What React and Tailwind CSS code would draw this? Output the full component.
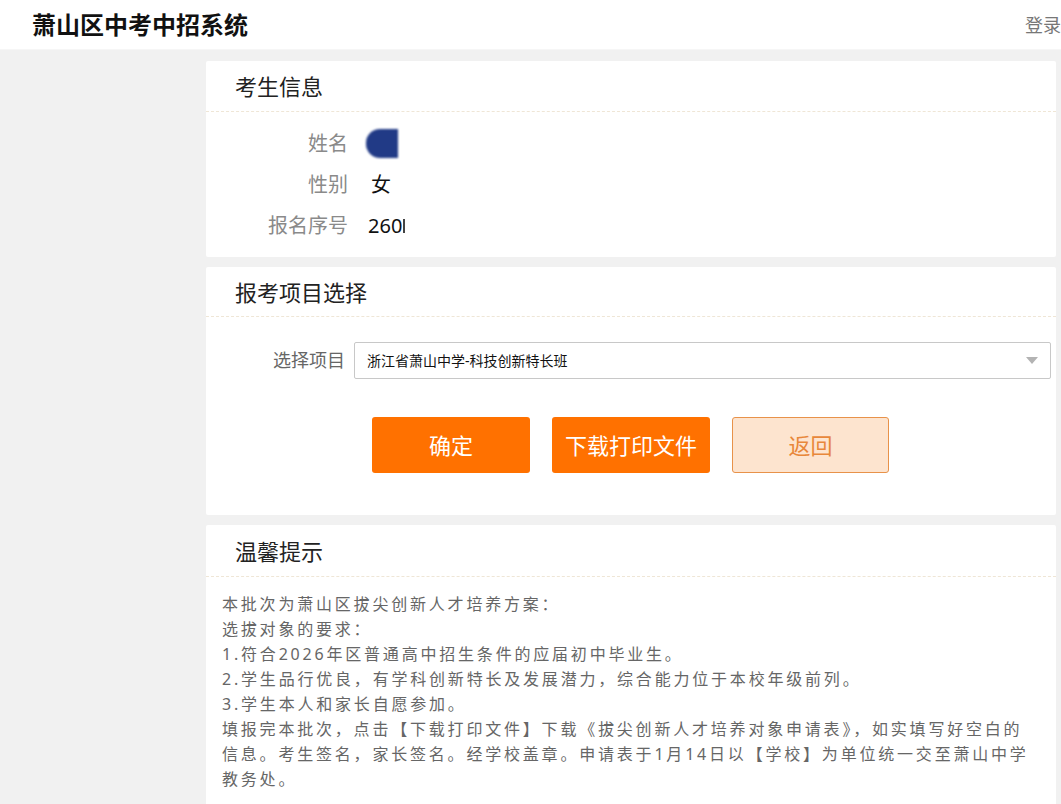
import React from 'react'

const sans = { fontFamily: '"Noto Sans", "Noto Sans CJK SC", sans-serif' }

function Card({ title, headerH, children }) {
  return (
    <div className="bg-white rounded-[2px]">
      <div className={`${headerH} flex items-center pl-[29px] border-b border-dashed border-[#efe6d6]`}>
        <h2 className="text-[22px] text-[#222] leading-none">{title}</h2>
      </div>
      {children}
    </div>
  )
}

function InfoRow({ label, children }) {
  return (
    <div className="flex items-center h-[41px]">
      <div className="w-[142px] text-right text-[20px] text-[#8a8a8a]">{label}</div>
      <div className="ml-[18px] text-[20px] text-[#111] flex items-center">{children}</div>
    </div>
  )
}

const notice = [
  '本批次为萧山区拔尖创新人才培养方案：',
  '选拔对象的要求：',
  '1.符合2026年区普通高中招生条件的应届初中毕业生。',
  '2.学生品行优良，有学科创新特长及发展潜力，综合能力位于本校年级前列。',
  '3.学生本人和家长自愿参加。',
  '填报完本批次，点击【下载打印文件】下载《拔尖创新人才培养对象申请表》，如实填写好空白的',
  '信息。考生签名，家长签名。经学校盖章。申请表于1月14日以【学校】为单位统一交至萧山中学',
  '教务处。',
]

export default function App() {
  return (
    <div className="min-h-screen bg-[#f1f1f1] overflow-hidden" style={sans}>
      <header className="h-[50px] bg-white flex items-center pl-[32px] border-b border-[#f6f6f6]">
        <h1 className="text-[24px] font-bold text-[#111] leading-none">萧山区中考中招系统</h1>
        <div className="ml-auto text-[18px] text-[#777] leading-none whitespace-nowrap">登录</div>
      </header>

      <main className="pl-[206px] pr-[5px] pt-[11px] flex flex-col gap-[10px]">
        <Card title="考生信息" headerH="h-[51px]">
          <div className="pt-[11px] pb-[11px]">
            <InfoRow label="姓名">
              <span className="block w-[32px] h-[29px] bg-[#213a86] rounded-l-[14px] blur-[1px]" />
            </InfoRow>
            <InfoRow label="性别">
              <span className="pl-[5px]">女</span>
            </InfoRow>
            <InfoRow label="报名序号">
              <span className="pl-[2px]">260</span>
              <span className="block ml-[1px] w-[2px] h-[14px] bg-[#444]" />
            </InfoRow>
          </div>
        </Card>

        <Card title="报考项目选择" headerH="h-[50px]">
          <div className="pt-[25px] pb-[42px] pr-[5px]">
            <div className="flex items-center">
              <div className="w-[139px] text-right text-[18px] text-[#666]">选择项目</div>
              <div className="ml-[9px] flex-1 h-[37px] border border-[#c8c8c8] rounded-[2px] flex items-center pl-[12px] pr-[12px]">
                <span className="text-[14px] text-[#111]">浙江省萧山中学-科技创新特长班</span>
                <svg className="ml-auto" width="12" height="7" viewBox="0 0 12 7">
                  <path d="M0 0h12L6 7z" fill="#b3b3b3" />
                </svg>
              </div>
            </div>
            <div className="flex gap-[22px] pl-[166px] mt-[38px]">
              <button className="w-[158px] h-[56px] rounded-[3px] bg-[#ff7100] text-white text-[22px]">确定</button>
              <button className="w-[158px] h-[56px] rounded-[3px] bg-[#ff7100] text-white text-[22px]">下载打印文件</button>
              <button className="w-[157px] h-[56px] rounded-[3px] bg-[#fde4cf] border border-[#e8924a] text-[#e8873a] text-[22px]">返回</button>
            </div>
          </div>
        </Card>

        <Card title="温馨提示" headerH="h-[52px]">
          <div className="pt-[15px] pb-[20px] pl-[16px] pr-[14px] text-[16px] leading-[25px] tracking-[2.8px] text-[#666]">
            {notice.map((l, i) => (
              <p key={i} className="whitespace-nowrap">{l}</p>
            ))}
          </div>
        </Card>
      </main>
    </div>
  )
}
